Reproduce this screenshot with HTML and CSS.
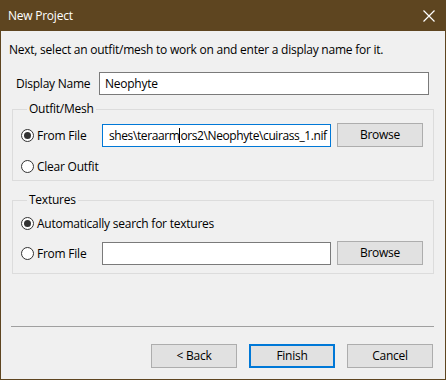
FILE: index.html
```html
<!DOCTYPE html>
<html lang="en">
<head>
    <meta charset="UTF-8">
    <title>New Project</title>
    <link rel="stylesheet" href="styles.css">
</head>
<body>
    <div class="window">
        <div class="titlebar">
            <span class="title">New Project</span>
            <svg class="close" width="12" height="12" viewBox="0 0 12 12">
                <path d="M0.5 0.5 L11.5 11.5 M11.5 0.5 L0.5 11.5" stroke="#fff" stroke-width="1.2" fill="none"/>
            </svg>
        </div>
        <div class="body">
            <p class="intro">Next, select an outfit/mesh to work on and enter a display name for it.</p>
            <div class="name-row">
                <span class="name-label">Display Name</span>
                <div class="field name-field">Neophyte</div>
            </div>
            <fieldset class="group group-mesh">
                <legend>Outfit/Mesh</legend>
                <div class="row">
                    <span class="radio checked"></span>
                    <span class="opt">From File</span>
                    <div class="field path-field focused">shes\teraarm<span class="caret"></span>ors2\Neophyte\cuirass_1.nif</div>
                    <div class="btn">Browse</div>
                </div>
                <div class="row row-next">
                    <span class="radio"></span>
                    <span class="opt">Clear Outfit</span>
                </div>
            </fieldset>
            <fieldset class="group group-tex">
                <legend>Textures</legend>
                <div class="row">
                    <span class="radio checked"></span>
                    <span class="opt wide">Automatically search for textures</span>
                </div>
                <div class="row row-tex">
                    <span class="radio"></span>
                    <span class="opt">From File</span>
                    <div class="field path-field"></div>
                    <div class="btn">Browse</div>
                </div>
            </fieldset>
            <div class="sep"></div>
            <div class="buttons">
                <div class="btn">&lt; Back</div>
                <div class="btn default">Finish</div>
                <div class="btn">Cancel</div>
            </div>
        </div>
    </div>
</body>
</html>
```

FILE: styles.css
```css
:root {
    --title-brown: #5e4520;
    --face: #f0f0f0;
    --btn-face: #e1e1e1;
    --btn-border: #adadad;
    --group-border: #dcdcdc;
    --focus-blue: #0078d7;
}
html, body {
    margin: 0;
    background: #ffffff;
}
body {
    font-family: 'Segoe UI', 'Open Sans', Arial, sans-serif;
    font-size: 12px;
    letter-spacing: -0.24px;
    color: #000;
}
.window {
    width: 444px;
    height: 379px;
    border: 1px solid var(--title-brown);
    border-top: none;
    background: var(--face);
    display: flex;
    flex-direction: column;
}
.titlebar {
    height: 31px;
    background: var(--title-brown);
    display: flex;
    align-items: center;
    justify-content: space-between;
    padding: 0 11px 0 8px;
    margin: 0 -1px;
}
.title {
    color: #fff;
    line-height: 16px;
}
.close {
    display: block;
}
.body {
    display: flex;
    flex-direction: column;
}
.intro {
    margin: 11px 0 0 8px;
    line-height: 16px;
}
.name-row {
    display: flex;
    align-items: center;
    margin: 14px 0 0 15px;
    height: 23px;
}
.name-label {
    flex: 0 0 83px;
}
.field {
    box-sizing: border-box;
    height: 23px;
    background: #fff;
    border: 1px solid #7a7a7a;
    line-height: 21px;
    padding: 0 5px;
    white-space: nowrap;
    overflow: hidden;
}
.name-field {
    width: 330px;
}
.group {
    margin: 6px 0 0 11px;
    width: 422px;
    box-sizing: border-box;
    border: 1px solid var(--group-border);
    padding: 6px 0 2px 8px;
    min-width: 0;
}
.group legend {
    padding: 0 2px;
    margin-left: 6px;
    line-height: 16px;
}
.group-tex {
    margin-top: 11px;
    padding-top: 3px;
    padding-bottom: 8px;
}
.row {
    display: flex;
    align-items: center;
    height: 24px;
}
.row-next {
    margin-top: 7px;
}
.row-tex {
    margin-top: 6px;
}
.radio {
    box-sizing: border-box;
    width: 13px;
    height: 13px;
    border: 1px solid #333;
    border-radius: 50%;
    background: #fff;
    margin-right: 3px;
    display: flex;
    align-items: center;
    justify-content: center;
    flex: 0 0 13px;
}
.radio.checked::after {
    content: "";
    width: 7px;
    height: 7px;
    border-radius: 50%;
    background: #333;
}
.opt {
    width: 65px;
    flex: 0 0 65px;
    white-space: nowrap;
}
.opt.wide {
    flex: 0 0 auto;
    width: auto;
}
.path-field {
    width: 229px;
    margin-right: 6px;
    letter-spacing: -0.4px;
}
.path-field.focused {
    border-color: var(--focus-blue);
    padding-left: 6px;
}
.caret {
    display: inline-block;
    width: 1px;
    height: 15px;
    background: #000;
    vertical-align: middle;
    margin-top: -2px;
}
.btn {
    box-sizing: border-box;
    width: 86px;
    height: 24px;
    background: var(--btn-face);
    border: 1px solid var(--btn-border);
    text-align: center;
    line-height: 22px;
}
.btn.default {
    border: 2px solid var(--focus-blue);
    line-height: 20px;
}
.sep {
    height: 1px;
    background: #a0a0a0;
    margin: 52px 0 0 10px;
    width: 423px;
}
.buttons {
    display: flex;
    gap: 12px;
    justify-content: flex-end;
    margin: 17px 12px 0 0;
}
```
